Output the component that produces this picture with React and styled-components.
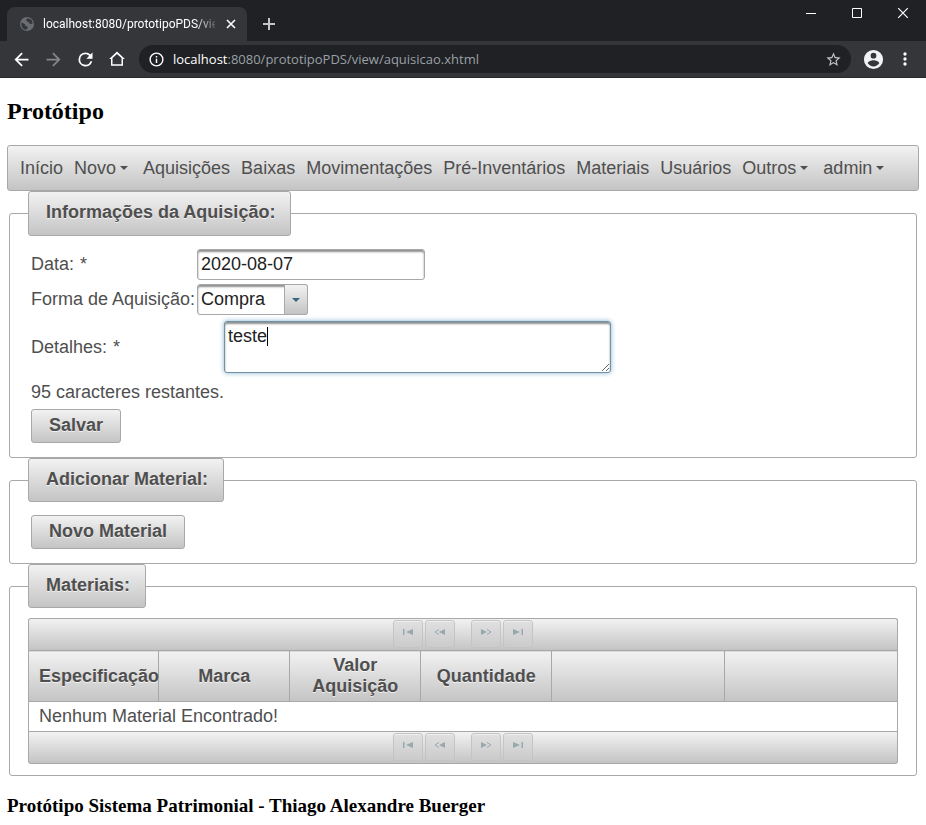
import React, { useState } from "react";
import styled, { createGlobalStyle, css } from "styled-components";

const GlobalStyle = createGlobalStyle`
  *, *::before, *::after { box-sizing: border-box; }
  body { margin: 0; background: #fff; }
  button, input, select, textarea { font: inherit; color: inherit; }
`;

const raised = css`
  background: linear-gradient(#f2f2f2, #c4c4c4);
  border: 1px solid #a8a8a8;
`;
const sunken = css`
  background: #fff;
  border: 1px solid #a8a8a8;
  border-radius: 3px;
  box-shadow: inset 0 2px 2px #8f8f8f;
  color: #222;
  outline: none;
`;

/* ---------- browser window ---------- */

const Browser = styled.header`
  background: #202124;
  color: #fff;
  font-family: "Open Sans", "Noto Sans", sans-serif;
`;
const TabStrip = styled.div`
  display: flex;
  align-items: flex-start;
  height: 41px;
  padding-left: 7px;
`;
const Tab = styled.div`
  display: flex;
  align-items: center;
  gap: 8px;
  width: 240px;
  height: 34px;
  margin-top: 7px;
  padding: 0 8px 0 12px;
  border-radius: 8px 8px 0 0;
  background: #35363a;
`;
const TabTitle = styled.span`
  flex: 1;
  min-width: 0;
  overflow: hidden;
  white-space: nowrap;
  font-family: Roboto, sans-serif;
  font-size: 12px;
  line-height: 18px;
  mask-image: linear-gradient(to right, #000 calc(100% - 20px), rgba(0, 0, 0, 0.2));
`;
const IconButton = styled.button`
  display: grid;
  place-items: center;
  flex: none;
  width: ${(p) => p.$w || 32}px;
  height: ${(p) => p.$h || 32}px;
  padding: 0;
  border: 0;
  background: none;
  color: ${(p) => p.$color || "#fff"};
`;
const NewTab = styled(IconButton)`
  margin: 8px 0 0 6px;
`;
const WindowControls = styled.div`
  display: flex;
  margin-left: auto;
`;
const Toolbar = styled.div`
  display: flex;
  align-items: center;
  height: 37px;
  padding: 0 5px;
  background: #35363a;
  border-bottom: 1px solid #28292c;
`;
const AddressBar = styled.div`
  display: flex;
  align-items: center;
  flex: 1;
  min-width: 0;
  height: 28px;
  margin: 0 6px;
  padding: 0 4px 0 9px;
  gap: 8px;
  border-radius: 14px;
  background: #202124;
`;
const Address = styled.span`
  flex: 1;
  min-width: 0;
  overflow: hidden;
  white-space: nowrap;
  font-size: 13px;
  line-height: 18px;
  color: #9aa0a6;
`;
const Host = styled.span`
  color: #fff;
`;

/* ---------- page ---------- */

const Page = styled.main`
  padding: 0 7px;
  font-family: "Liberation Sans", Arial, sans-serif;
  font-size: 18px;
  line-height: 21px;
  color: #4f4f4f;
`;
const Title = styled.h2`
  margin: 0;
  padding: 19px 0 20px;
  font: bold 24px/28px "Liberation Serif", "Times New Roman", serif;
  color: #000;
`;
const Footer = styled.h3`
  margin: 0;
  padding: 19px 0 8px;
  font: bold 19px/21px "Liberation Serif", "Times New Roman", serif;
  color: #000;
`;
const MenuBar = styled.nav`
  ${raised}
  display: flex;
  align-items: center;
  gap: 11px;
  height: 46px;
  padding: 0 12px;
  border-radius: 3px;
`;
const MenuLink = styled.a`
  display: flex;
  align-items: center;
  color: inherit;
  text-decoration: none;
  white-space: nowrap;
`;
const Caret = styled.svg`
  flex: none;
  width: 16px;
  height: 16px;
`;
const Fieldset = styled.fieldset`
  min-width: 0;
  margin: 0 2px;
  padding: ${(p) => p.$pad};
  border: 1px solid #a8a8a8;
  border-radius: 3px;
`;
const Legend = styled.legend`
  ${raised}
  height: ${(p) => (p.$tall ? 45 : 44)}px;
  padding: 10px 15px 10px 17px;
  border-radius: 3px;
  font-weight: bold;
  text-shadow: 0 1px 0 rgba(255, 255, 255, 0.7);
`;
const Form = styled.form`
  display: flex;
  flex-direction: column;
  align-items: flex-start;
  padding: 0 3px;
`;
const Field = styled.div`
  display: grid;
  grid-template-columns: ${(p) => p.$label || 166}px auto;
  align-items: center;
  margin-bottom: ${(p) => p.$gap || 4}px;
`;
const Label = styled.label`
  white-space: nowrap;
`;
const Required = styled.span`
  margin-left: 6px;
`;
const TextInput = styled.input`
  ${sunken}
  width: 228px;
  height: 31px;
  padding: 0 3px;
`;
const SelectBox = styled.div`
  position: relative;
  width: 111px;
  height: 31px;
`;
const Select = styled.select`
  ${sunken}
  appearance: none;
  width: 100%;
  height: 100%;
  padding: 0 26px 0 3px;
`;
const SelectArrow = styled.span`
  ${raised}
  position: absolute;
  inset: 0 0 0 auto;
  display: grid;
  place-items: center;
  width: 24px;
  border-radius: 0 3px 3px 0;
  color: #38667f;
  pointer-events: none;
`;
const AreaBox = styled.div`
  position: relative;
  width: 387px;
  height: 52px;
`;
const TextArea = styled.textarea`
  ${sunken}
  display: block;
  width: 100%;
  height: 100%;
  padding: 4px 3px;
  border-color: #6f93a6;
  box-shadow: inset 0 2px 2px #8f8f8f, 0 0 5px #85b2cb;
  caret-color: transparent;
  line-height: 21px;
`;
const InsertionPoint = styled.span`
  position: absolute;
  top: 6px;
  left: 43px;
  width: 1px;
  height: 19px;
  background: #000;
`;
const Remaining = styled.output`
  margin-bottom: 6px;
`;
const Button = styled.button`
  ${raised}
  height: 34px;
  padding: 0 17px 2px;
  border-radius: 3px;
  font-weight: bold;
  text-shadow: 0 1px 0 rgba(255, 255, 255, 0.7);
`;
const Paginator = styled.div`
  ${raised}
  display: flex;
  justify-content: center;
  gap: 2px;
  height: 32px;
  padding-top: 1px;
  border-bottom-width: ${(p) => (p.$foot ? 1 : 0)}px;
  border-top-width: ${(p) => (p.$foot ? 0 : 1)}px;
  border-radius: ${(p) => (p.$foot ? "0 0 3px 3px" : "3px 3px 0 0")};
`;
const PageButton = styled.button`
  display: grid;
  place-items: center;
  width: 30px;
  height: 28px;
  padding: 0 0 4px;
  border: 1px solid #c4c4c4;
  border-radius: 3px;
  background: linear-gradient(#e0e0e0, #cbcbcb);
  box-shadow: inset 0 1px 0 #efefef;
  color: #98a8ad;
  margin-right: ${(p) => (p.$split ? 14 : 0)}px;
`;
const Table = styled.table`
  width: 100%;
  table-layout: fixed;
  border-collapse: collapse;
`;
const HeadCell = styled.th`
  ${raised}
  width: ${(p) => p.$w};
  height: 51px;
  padding: 3px 10px;
  text-shadow: 0 1px 0 rgba(255, 255, 255, 0.7);
`;
const Cell = styled.td`
  height: 30px;
  padding: 4px 10px;
  border: 1px solid #a8a8a8;
`;

/* ---------- icons ---------- */

const Arrow = () => (
  <Caret viewBox="0 0 16 16" aria-hidden="true">
    <path d="M4 6h8l-4 4z" fill="currentColor" />
  </Caret>
);
const Globe = () => (
  <svg width="16" height="16" viewBox="0 0 16 16" aria-hidden="true">
    <circle cx="8" cy="8" r="7" fill="#6a6d71" />
    <path d="M2.4 6.2 6 8.200l.2 1.600 2.200.8.2 2-1.800 1.200C3.800 13.200 1.900 10.500 2.400 6.200zM8.200 2.200l-1 1.800.6 1.400 2.200.6.2 1.600 3 .4.4-1.800-1.400-2.600z" fill="#35363a" />
  </svg>
);
const Cross = ({ size, stroke }) => (
  <svg width={size} height={size} viewBox="0 0 10 10" aria-hidden="true">
    <path d="M1 1l8 8M9 1l-8 8" stroke="currentColor" strokeWidth={stroke} />
  </svg>
);
const Plus = () => (
  <svg width="12" height="12" viewBox="0 0 12 12" aria-hidden="true">
    <path d="M6 0v12M0 6h12" stroke="currentColor" strokeWidth="2" />
  </svg>
);
const ToolIcon = ({ d, size = 21 }) => (
  <svg width={size} height={size} viewBox="0 0 24 24" fill="currentColor" aria-hidden="true">
    <path d={d} />
  </svg>
);
const paths = {
  back: "M20 11H7.83l5.590-5.590L12 4l-8 8 8 8 1.410-1.410L7.830 13H20z",
  forward: "M12 4l-1.410 1.410L16.170 11H4v2h12.170l-5.580 5.590L12 20l8-8z",
  reload: "M17.650 6.350A7.960 7.960 0 0 0 12 4a8 8 0 1 0 7.730 10h-2.080A6 6 0 1 1 12 6c1.660 0 3.140.690 4.220 1.780L13 11h7V4z",
  home: "M12 5.200 18 10.600V19H6V10.600zM12 2 1.500 12H4v9h16v-9h2.500z",
  info: "M11 7h2v2h-2zm0 4h2v6h-2zm1-9a10 10 0 1 0 0 20 10 10 0 0 0 0-20zm0 18a8 8 0 1 1 0-16 8 8 0 0 1 0 16z",
  star: "M22 9.240l-7.190-.620L12 2 9.190 8.630 2 9.240l5.460 4.730L5.820 21 12 17.270 18.180 21l-1.630-7.030zM12 15.400l-3.760 2.270 1-4.280-3.320-2.880 4.380-.380L12 6.100l1.710 4.040 4.380.380-3.320 2.880 1 4.280z",
  user: "M12 2a10 10 0 1 0 0 20 10 10 0 0 0 0-20zm0 3a3 3 0 1 1 0 6 3 3 0 0 1 0-6zm0 14.200a7.200 7.200 0 0 1-6-3.220c.030-1.990 4-3.080 6-3.080s5.970 1.090 6 3.080a7.200 7.200 0 0 1-6 3.220z",
  more: "M12 8a2 2 0 1 0 0-4 2 2 0 0 0 0 4zm0 2a2 2 0 1 0 0 4 2 2 0 0 0 0-4zm0 6a2 2 0 1 0 0 4 2 2 0 0 0 0-4z",
};

const pagerIcons = [
  { name: "Primeira página", solid: "M1 0h1.500v6H1zM11 0v6L4 3z" },
  { name: "Página anterior", solid: "M11 0v6L5 3z", line: "M5 .5 1 3l4 2.500", split: true },
  { name: "Próxima página", solid: "M1 0v6l6-3z", line: "M7 .5 11 3 7 5.500" },
  { name: "Última página", solid: "M1 0v6l7-3zM9.500 0H11v6H9.500z" },
];

const Pager = ({ foot }) => (
  <Paginator $foot={foot}>
    {pagerIcons.map((p) => (
      <PageButton key={p.name} type="button" disabled aria-label={p.name} $split={p.split}>
        <svg width="12" height="6" viewBox="0 0 12 6" aria-hidden="true">
          <path d={p.solid} fill="currentColor" />
          {p.line && <path d={p.line} fill="none" stroke="currentColor" />}
        </svg>
      </PageButton>
    ))}
  </Paginator>
);

const menu = [
  ["Início"],
  ["Novo", true],
  ["Aquisições"],
  ["Baixas"],
  ["Movimentações"],
  ["Pré-Inventários"],
  ["Materiais"],
  ["Usuários"],
  ["Outros", true],
  ["admin", true],
];
const columns = [
  ["Especificação", "15%"],
  ["Marca", "131px"],
  ["Valor Aquisição", "131px"],
  ["Quantidade", "131px"],
  ["", "auto"],
  ["", "auto"],
];

export default function App() {
  const [date, setDate] = useState("2020-08-07");
  const [details, setDetails] = useState("teste");

  return (
    <>
      <GlobalStyle />
      <Browser>
        <TabStrip>
          <Tab>
            <Globe />
            <TabTitle>localhost:8080/prototipoPDS/vie</TabTitle>
            <IconButton $w={16} $h={16} aria-label="Fechar guia">
              <Cross size={10} stroke={1.6} />
            </IconButton>
          </Tab>
          <NewTab aria-label="Nova guia" $color="#c4c7ca">
            <Plus />
          </NewTab>
          <WindowControls>
            <IconButton $w={46} $h={26} aria-label="Minimizar">
              <svg width="10" height="10" viewBox="0 0 10 10">
                <path d="M0 5.500h10" stroke="currentColor" />
              </svg>
            </IconButton>
            <IconButton $w={46} $h={26} aria-label="Maximizar">
              <svg width="10" height="10" viewBox="0 0 10 10">
                <path d="M.5.500h9v9h-9z" fill="none" stroke="currentColor" />
              </svg>
            </IconButton>
            <IconButton $w={46} $h={26} aria-label="Fechar">
              <Cross size={12} stroke={1} />
            </IconButton>
          </WindowControls>
        </TabStrip>
        <Toolbar>
          <IconButton aria-label="Voltar"><ToolIcon d={paths.back} /></IconButton>
          <IconButton aria-label="Avançar" $color="#85868a"><ToolIcon d={paths.forward} /></IconButton>
          <IconButton aria-label="Recarregar"><ToolIcon d={paths.reload} /></IconButton>
          <IconButton aria-label="Página inicial"><ToolIcon d={paths.home} size={18} /></IconButton>
          <AddressBar>
            <ToolIcon d={paths.info} size={17} />
            <Address><Host>localhost</Host>:8080/prototipoPDS/view/aquisicao.xhtml</Address>
            <IconButton $w={28} $h={28} $color="#c4c6c9" aria-label="Favoritos">
              <ToolIcon d={paths.star} size={17} />
            </IconButton>
          </AddressBar>
          <IconButton aria-label="Perfil" $color="#f1f3f4"><ToolIcon d={paths.user} size={23} /></IconButton>
          <IconButton aria-label="Menu"><ToolIcon d={paths.more} size={20} /></IconButton>
        </Toolbar>
      </Browser>

      <Page>
        <Title>Protótipo</Title>
        <MenuBar>
          {menu.map(([text, sub]) => (
            <MenuLink key={text} href="#">
              {text}
              {sub && <Arrow />}
            </MenuLink>
          ))}
        </MenuBar>

        <Fieldset $pad="13px 18px 14px">
          <Legend $tall>Informações da Aquisição:</Legend>
          <Form onSubmit={(e) => e.preventDefault()}>
            <Field>
              <Label htmlFor="data">Data:<Required>*</Required></Label>
              <TextInput id="data" value={date} onChange={(e) => setDate(e.target.value)} />
            </Field>
            <Field $gap={6}>
              <Label htmlFor="forma">Forma de Aquisição:</Label>
              <SelectBox>
                <Select id="forma">
                  <option>Compra</option>
                </Select>
                <SelectArrow><Arrow /></SelectArrow>
              </SelectBox>
            </Field>
            <Field $label={193} $gap={9}>
              <Label htmlFor="detalhes">Detalhes:<Required>*</Required></Label>
              <AreaBox>
                <TextArea id="detalhes" value={details} onChange={(e) => setDetails(e.target.value)} />
                <InsertionPoint />
              </AreaBox>
            </Field>
            <Remaining>{100 - details.length} caracteres restantes.</Remaining>
            <Button>Salvar</Button>
          </Form>
        </Fieldset>

        <Fieldset $pad="13px 18px 14px">
          <Legend>Adicionar Material:</Legend>
          <Form onSubmit={(e) => e.preventDefault()}>
            <Button>Novo Material</Button>
          </Form>
        </Fieldset>

        <Fieldset $pad="10px 18px 11px">
          <Legend>Materiais:</Legend>
          <Pager />
          <Table>
            <thead>
              <tr>
                {columns.map(([text, w], i) => (
                  <HeadCell key={i} $w={w} scope="col">{text}</HeadCell>
                ))}
              </tr>
            </thead>
            <tbody>
              <tr>
                <Cell colSpan={6}>Nenhum Material Encontrado!</Cell>
              </tr>
            </tbody>
          </Table>
          <Pager foot />
        </Fieldset>
        <Footer>Protótipo Sistema Patrimonial - Thiago Alexandre Buerger</Footer>
      </Page>
    </>
  );
}
